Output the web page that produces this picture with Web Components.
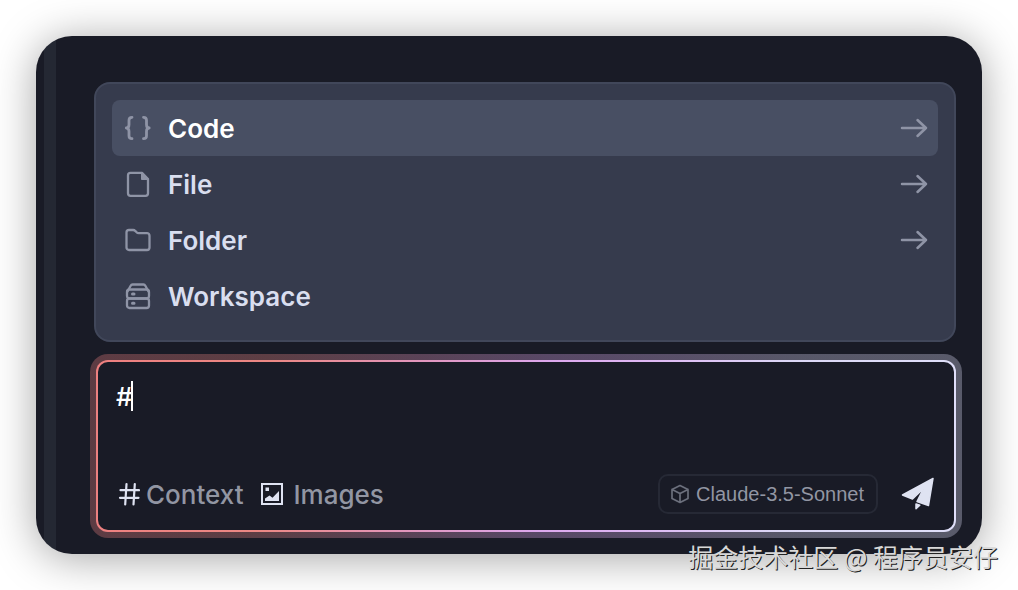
<!DOCTYPE html>
<html lang="en">
<head>
<meta charset="utf-8">
<meta name="viewport" content="width=device-width, initial-scale=1">
<title>Context picker</title>
<style>
  body {
    margin: 0;
    background: #fff;
    font-family: Inter, "Noto Sans CJK SC", sans-serif;
  }
</style>
</head>
<body>
<chat-window>
  <context-menu>
    <context-item icon="code" active more>Code</context-item>
    <context-item icon="file" more>File</context-item>
    <context-item icon="folder" more>Folder</context-item>
    <context-item icon="workspace">Workspace</context-item>
  </context-menu>
  <chat-composer value="#">
    <tool-button slot="tools" icon="hash">Context</tool-button>
    <tool-button slot="tools" icon="image" wide>Images</tool-button>
    <model-button slot="model">Claude-3.5-Sonnet</model-button>
  </chat-composer>
  <author-mark slot="mark">掘金技术社区 @ 程序员安仔</author-mark>
</chat-window>

<script>
const svg = (w, h, body) =>
  `<svg width="${w}" height="${h}" viewBox="0 0 ${w} ${h}" fill="none" stroke="currentColor" stroke-width="2.3" stroke-linecap="round" stroke-linejoin="round" aria-hidden="true">${body}</svg>`;

const icons = {
  code: svg(28, 28, '<path stroke-width="2.8" d="M8 3.300Q5 3.300 5 6.300V10.500Q5 14 2.300 14Q5 14 5 17.500V21.700Q5 24.700 8 24.700M19.500 3.300Q22.500 3.300 22.500 6.300V10.500Q22.500 14 25.200 14Q22.500 14 22.500 17.500V21.700Q22.500 24.700 19.500 24.700"/>'),
  file: svg(28, 28, '<path d="M18 2.800H6.500A2.500 2.500 0 0 0 4 5.300v18A2.500 2.500 0 0 0 6.500 25.800h15a2.500 2.500 0 0 0 2.500-2.500V9z"/><path fill="currentColor" stroke-width="1" d="M17.500 2.800V9.500H24.300z"/>'),
  folder: svg(28, 28, '<path d="M2.500 21.500v-15A2.500 2.500 0 0 1 5 4h4.200q1.200 0 2 .9L12.600 6.300q.8.900 2 .9H23a2.500 2.500 0 0 1 2.500 2.500v11.800A2.500 2.500 0 0 1 23 24H5a2.500 2.500 0 0 1-2.500-2.500z"/>'),
  workspace: svg(28, 28, '<path d="M3.500 9.500 6.500 4Q7.300 2.500 8.500 2.500h11q1.200 0 2 1.500l3 5.500"/><rect x="3" y="7.500" width="22" height="9" rx="2.500"/><rect x="3" y="16.500" width="22" height="9.500" rx="2.500"/><path stroke-width="3" d="M8.500 12h1.500M8.500 21.200h1.500"/>'),
  arrow: svg(28, 28, '<path stroke-width="2.500" d="M2 14h24M17.500 6l8.500 8-8.500 8"/>'),
  hash: svg(22, 24, '<path stroke-width="2.200" d="M8.500 2 7.200 22.500M16.800 2l-1.300 20.500M2.500 8.200h18.500M2 15.800h18.500"/>'),
  image: svg(24, 24, '<path stroke-linejoin="miter" stroke-width="2" d="M2 2h20v20H2z"/><path fill="currentColor" stroke="none" d="M5 19v-2.500L9.500 13.500l3 2.300L19 9v10zM5.500 5.500h3.500v3.500H5.500z"/>'),
  cube: svg(20, 20, '<path stroke-width="1.700" d="M10 1.500 18 5.500v9L10 18.500 2 14.500v-9zM2 5.500l8 4 8-4M10 9.500v9"/>'),
  send: svg(36, 36, '<path fill="currentColor" stroke-width="1.500" d="M33 2.500 2.500 19 12.500 23 23.500 12.500 17 25.500 28.500 29.500zM16 28v4.800L19.800 29.300z"/>')
};

function define(name, css, html) {
  customElements.define(name, class extends HTMLElement {
    constructor() {
      super();
      const template = document.createElement('template');
      template.innerHTML = `<style>*{box-sizing:border-box}svg{display:block;flex:none}button{font:inherit;color:inherit;background:none;border:0;margin:0;padding:0}${css}</style>${html(this)}`;
      this.attachShadow({ mode: 'open' }).append(template.content.cloneNode(true));
    }
  });
}

define('chat-window', `
  :host { display: block; position: relative; padding: 36px; }
  main {
    padding: 46px 20px 16px 54px;
    border-radius: 36px;
    background: linear-gradient(90deg, transparent 8px, #242833 8px 20px, transparent 20px) #191b26;
    box-shadow: 0 4px 44px rgba(0, 0, 0, .36);
  }
`, () => '<main><slot></slot></main><slot name="mark"></slot>');

define('context-menu', `
  :host { display: block; margin: 0 6px 12px 4px; }
  nav {
    padding: 16px;
    border: 2px solid #41475a;
    border-radius: 16px;
    background: #363b4d;
  }
`, () => '<nav aria-label="Context type"><slot></slot></nav>');

define('context-item', `
  :host { display: block; color: #d9deef; font-size: 26px; font-weight: 600; }
  :host([active]) { color: #fff; }
  button {
    display: flex; align-items: center; gap: 16px;
    width: 100%; height: 56px; padding: 0 10px 0 12px;
    border-radius: 8px; text-align: left; line-height: 32px;
  }
  :host([active]) button { background: #484f63; }
  .label { flex: 1; padding-top: 2px; }
  svg { color: #8f94a6; }
`, el => `<button type="button">${icons[el.getAttribute('icon')]}<span class="label"><slot></slot></span>${el.hasAttribute('more') ? icons.arrow : ''}</button>`);

define('chat-composer', `
  :host {
    --glow: linear-gradient(94deg, #ee8080 0%, #ec8884 20%, #e297c0 38%, #dda8ee 52%, #dfb8f4 63%, #dcd8f6 80%, #e0e0fa 100%);
    display: block;
  }
  .halo {
    padding: 6px; border-radius: 18px;
    background: linear-gradient(rgba(25, 27, 38, .68), rgba(25, 27, 38, .68)), var(--glow);
  }
  .edge { padding: 2px; border-radius: 12px; background: var(--glow); }
  form {
    position: relative; padding: 18px 18px 16px;
    border-radius: 10px; background: #191b26;
  }
  textarea {
    display: block; width: 100%; height: 94px; padding: 0;
    border: 0; outline: 0; resize: none; background: none;
    color: #fff; font: 500 26px/34px Inter, sans-serif;
  }
  .caret { position: absolute; left: 33px; top: 19px; width: 2px; height: 30px; background: #fff; }
  .bar { display: flex; align-items: center; gap: 16px; padding-left: 2px; }
  .space { flex: 1; }
  .send { color: #dfe3f2; margin-left: 6px; }
`, el => `<div class="halo"><div class="edge"><form>
  <textarea aria-label="Message">${el.getAttribute('value')}</textarea><span class="caret"></span>
  <div class="bar"><slot name="tools"></slot><span class="space"></span><slot name="model"></slot>
  <button class="send" type="button" aria-label="Send">${icons.send}</button></div>
</form></div></div>`);

define('tool-button', `
  :host { display: block; color: #9296a3; font-size: 26px; font-weight: 500; }
  button { display: flex; align-items: center; gap: 6px; line-height: 32px; }
  :host([wide]) button { gap: 10px; }
  span { padding-top: 2px; }
  svg { color: #dfe3f2; }
`, el => `<button type="button">${icons[el.getAttribute('icon')]}<span><slot></slot></span></button>`);

define('model-button', `
  :host { display: block; color: #9296a3; font: 20px/24px "Liberation Sans", Arial, sans-serif; }
  button {
    display: flex; align-items: center; gap: 6px;
    height: 40px; padding: 0 12px 0 10px;
    border: 2px solid #262935; border-radius: 10px;
  }
  svg { color: #6b6f7c; }
`, () => `<button type="button">${icons.cube}<span><slot></slot></span></button>`);

define('author-mark', `
  :host {
    display: block; position: absolute; right: 20px; bottom: 16px;
    color: #d8d8d8; font: 25px/36px "Noto Sans CJK SC", sans-serif;
    text-shadow: 1px 1px 0 #222; white-space: nowrap;
  }
`, () => '<slot></slot>');
</script>
</body>
</html>
